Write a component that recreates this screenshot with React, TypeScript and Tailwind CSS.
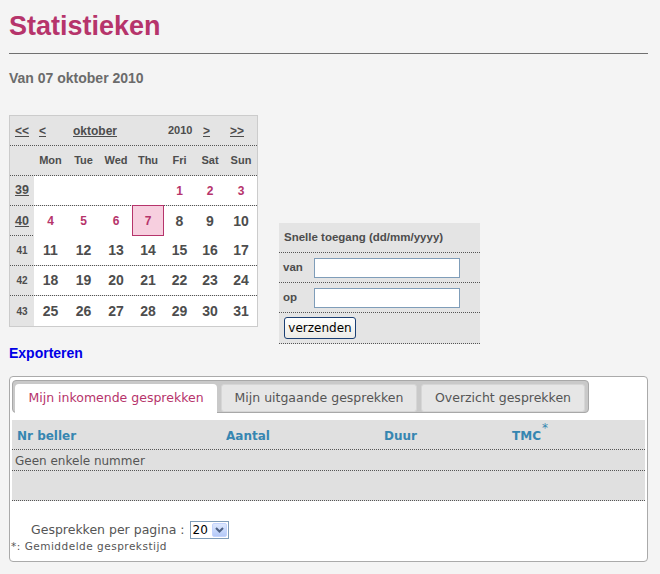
import React from "react";

const COLS = "grid grid-cols-[24px_33px_33px_32px_32px_31px_30px_32px]";

type Day = { n: number; pink?: boolean; sel?: boolean } | null;

const weeks: { nr: number; link: boolean; days: Day[] }[] = [
  { nr: 39, link: true, days: [null, null, null, null, { n: 1, pink: true }, { n: 2, pink: true }, { n: 3, pink: true }] },
  {
    nr: 40,
    link: true,
    days: [{ n: 4, pink: true }, { n: 5, pink: true }, { n: 6, pink: true }, { n: 7, pink: true, sel: true }, { n: 8 }, { n: 9 }, { n: 10 }],
  },
  { nr: 41, link: false, days: [11, 12, 13, 14, 15, 16, 17].map((n) => ({ n })) },
  { nr: 42, link: false, days: [18, 19, 20, 21, 22, 23, 24].map((n) => ({ n })) },
  { nr: 43, link: false, days: [25, 26, 27, 28, 29, 30, 31].map((n) => ({ n })) },
];

const dayNames = ["Mon", "Tue", "Wed", "Thu", "Fri", "Sat", "Sun"];

const Calendar: React.FC = () => (
  <div className="w-[249px] border border-[#cccccc] bg-[#e4e4e4] text-[#4d4d4d] font-bold font-['Liberation_Sans',Arial,sans-serif] shrink-0">
    {/* navigation */}
    <div className={`${COLS} h-[30px] border-b border-dotted border-[#555] items-center text-[12px]`}>
      <span className="pl-[5px] underline">&lt;&lt;</span>
      <span className="pl-[5px] underline">&lt;</span>
      <span className="col-span-3 pl-[6px] underline">oktober</span>
      <span className="pl-[4px] text-[11px]">2010</span>
      <span className="pl-[8px] underline">&gt;</span>
      <span className="pl-[5px] underline">&gt;&gt;</span>
    </div>
    {/* day names */}
    <div className={`${COLS} h-[30px] border-b border-dotted border-[#555] items-center text-[11px]`}>
      <span />
      {dayNames.map((d) => (
        <span key={d} className="text-center">
          {d}
        </span>
      ))}
    </div>
    {weeks.map((w, wi) => (
      <div
        key={w.nr}
        className={`${COLS} h-[30px] ${wi < weeks.length - 1 ? "border-b border-dotted border-[#555]" : ""}`}
      >
        <span
          className={`flex items-center justify-center ${w.link ? "underline text-[12.5px]" : "text-[10px]"}`}
        >
          {w.nr}
        </span>
        {w.days.map((d, i) =>
          d === null ? (
            <span key={i} className="bg-white" />
          ) : d.sel ? (
            <span
              key={i}
              className="self-start -mt-px h-[31px] flex items-center justify-center border border-[#b6346b] bg-[#f7cfdf] text-[12px] text-[#b6346b]"
            >
              {d.n}
            </span>
          ) : (
            <span
              key={i}
              className={`bg-white flex items-center justify-center ${
                d.pink ? "text-[12px] text-[#b6346b]" : "text-[14px]"
              }`}
            >
              {d.n}
            </span>
          )
        )}
      </div>
    ))}
  </div>
);

const QuickAccess: React.FC = () => (
  <div className="ml-[21px] mt-[108px] w-[201px] bg-[#e4e4e4] text-[#4d4d4d] font-['Liberation_Sans',Arial,sans-serif] text-[11.5px] font-bold">
    <div className="h-[30px] flex items-center pl-[5px] border-b border-dotted border-[#555]">
      Snelle toegang (dd/mm/yyyy)
    </div>
    {["van", "op"].map((l) => (
      <div key={l} className="h-[30px] flex items-center border-b border-dotted border-[#555]">
        <span className="w-[35px] pl-[4px]">{l}</span>
        <div className="w-[146px] h-[20px] border border-[#7f9db9] bg-white" />
      </div>
    ))}
    <div className="h-[31px] flex items-center pl-[5px] border-b border-dotted border-[#555]">
      <button className="w-[72px] h-[22px] rounded-[3px] border border-[#1b3f73] bg-gradient-to-b from-white to-[#ecebe6] text-[12px] font-normal text-black font-['DejaVu_Sans',Verdana,sans-serif] leading-none">
        verzenden
      </button>
    </div>
  </div>
);

const tabs = [
  { label: "Mijn inkomende gesprekken", w: "w-[202px]", active: true },
  { label: "Mijn uitgaande gesprekken", w: "w-[196px]", active: false },
  { label: "Overzicht gesprekken", w: "w-[164px]", active: false },
];

const App: React.FC = () => {
  return (
    <div className="min-h-[574px] bg-[#f4f4f4] pl-[9px] pr-[12px] pt-[11px] font-['Liberation_Sans',Arial,sans-serif]">
      <h1 className="text-[27px] leading-[30px] font-bold text-[#b6346b]">Statistieken</h1>
      <div className="mt-[12px] h-px bg-[#707070]" />
      <div className="mt-[15px] text-[14px] leading-[18px] font-bold text-[#6b6b6b]">Van 07 oktober 2010</div>

      <div className="mt-[28px] flex items-start">
        <Calendar />
        <QuickAccess />
      </div>

      <div className="text-[14px] leading-[18px] font-bold text-[#0000e6]">Exporteren</div>

      <div className="mt-[14px] w-[639px] border border-[#aaaaaa] rounded-[4px] bg-white font-['DejaVu_Sans',Verdana,sans-serif]">
        {/* tabs */}
        <div className="mt-[3px] ml-[2px] w-[577px] h-[33px] border border-[#a8a8a8] rounded-[4px] bg-[#c9c9c9] flex items-start gap-[4px] pl-[2px] pt-[3px]">
          {tabs.map((t) =>
            t.active ? (
              <div
                key={t.label}
                className={`${t.w} h-[31px] bg-white rounded-t-[4px] flex items-center justify-center text-[12.5px] text-[#b6346b] pb-[2px]`}
              >
                {t.label}
              </div>
            ) : (
              <div
                key={t.label}
                className={`${t.w} h-[28px] bg-[#e6e6e6] border border-[#d6d6d6] rounded-[3px] flex items-center justify-center text-[12.5px] text-[#555]`}
              >
                {t.label}
              </div>
            )
          )}
        </div>

        {/* table */}
        <div className="mt-[7px] mx-[2px] bg-[#e0e0e0]">
          <div className="h-[30px] flex items-center border-b border-dotted border-[#555] text-[12px] font-bold text-[#3686b1] pt-[2px]">
            <span className="w-[214px] pl-[5px]">Nr beller</span>
            <span className="w-[158px]">Aantal</span>
            <span className="w-[128px]">Duur</span>
            <span className="flex items-start">
              TMC<span className="text-[12px] font-normal leading-none -mt-[5px] ml-px">*</span>
            </span>
          </div>
          <div className="h-[21px] flex items-center pl-[3px] pt-[2px] border-b border-dotted border-[#555] text-[12px] text-[#555]">
            Geen enkele nummer
          </div>
          <div className="h-[30px] border-b border-dotted border-[#555]" />
        </div>

        <div className="mt-[20px] h-[18px] flex items-center pl-[21px] text-[12.5px] text-[#555]">
          <span>Gesprekken per pagina :</span>
          <div className="ml-[5px] w-[39px] h-[18px] border border-[#7f9db9] bg-white flex items-center justify-between text-[12px] text-black">
            <span className="pl-[2px]">20</span>
            <span className="w-[15px] h-[14px] mr-px rounded-[2px] bg-gradient-to-b from-[#dde8fe] to-[#b4c9f7] border border-[#c3d3fd] flex items-center justify-center">
              <svg width="9" height="6" viewBox="0 0 9 6">
                <path d="M1 1 L4.5 4.5 L8 1" stroke="#4d6185" strokeWidth="2" fill="none" />
              </svg>
            </span>
          </div>
        </div>
        <div className="mt-[1px] pl-[1px] pb-[9px] text-[10.5px] leading-[12px] tracking-[0.5px] text-[#555]">
          *: Gemiddelde gesprekstijd
        </div>
      </div>
    </div>
  );
};

export default App;
